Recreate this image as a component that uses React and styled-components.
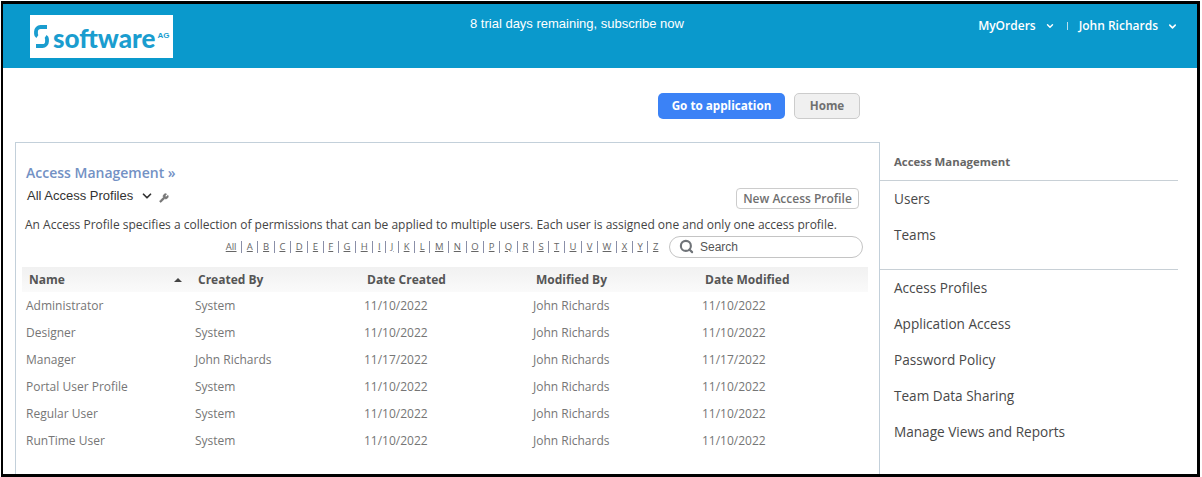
import React from "react";
import styled, { createGlobalStyle } from "styled-components";
import { Search as SearchIcon, ChevronDown, Wrench } from "lucide-react";

const Global = createGlobalStyle`
  html, body { margin: 0; padding: 0; background: #fff; height: 477px; overflow: hidden; }
  body { font-family: "Open Sans", "Liberation Sans", sans-serif; }
`;

const Frame = styled.div`
  box-sizing: border-box;
  margin: 1px 0 0 1px;
  width: 1199px;
  height: 476px;
  border: 3px solid #000;
  border-left-width: 2px;
  background: #fff;
  overflow: hidden;
`;

const Header = styled.header`
  height: 64px;
  background: #0a99cc;
  padding: 11px 0 0 27px;
  box-sizing: border-box;
  display: grid;
  grid-template-columns: 143px 1fr auto;
  align-items: start;
`;

const Logo = styled.div`
  width: 143px;
  height: 43px;
  background: #fff;
  display: flex;
  align-items: center;
  padding-left: 4px;
  box-sizing: border-box;
  color: #1a9dcf;
`;

const LogoWord = styled.span`
  font-family: "Lato", sans-serif;
  font-weight: 900;
  font-size: 26px;
  line-height: 1;
  margin-left: 4px;
  transform: translateY(1px);
`;

const LogoAg = styled.sup`
  font-family: "Liberation Sans", sans-serif;
  font-weight: 700;
  font-size: 8px;
  line-height: 1;
  margin-left: 2px;
  transform: translateY(-1px);
`;

const Trial = styled.div`
  font-family: "Liberation Sans", sans-serif;
  font-size: 13px;
  line-height: 16px;
  color: #fff;
  padding: 1px 0 0 297px;
`;

const UserArea = styled.nav`
  display: flex;
  align-items: center;
  color: #fff;
  font-size: 12px;
  font-weight: 600;
  line-height: 16px;
  padding: 3px 19px 0 0;
`;

const NavItem = styled.span`
  display: inline-flex;
  align-items: center;
  gap: ${(p) => p.$gap}px;
`;

const NavDivider = styled.span`
  width: 1px;
  height: 8px;
  background: #b9dfee;
  margin: 0 11px 0 12px;
`;

const ActionRow = styled.div`
  display: flex;
  gap: 9px;
  padding: 25px 0 0 655px;
  height: 49px;
  box-sizing: content-box;
`;

const PrimaryButton = styled.button`
  width: 127px;
  height: 26px;
  border: 0;
  border-radius: 5px;
  background: #3b82f6;
  color: #fff;
  font: 700 11.7px/24px "Open Sans", sans-serif;
  padding: 0 0 2px;
`;

const SecondaryButton = styled.button`
  width: 66px;
  height: 26px;
  border: 1px solid #ccc;
  border-radius: 5px;
  background: #f0f0f0;
  color: #707070;
  font: 700 11.7px/22px "Open Sans", sans-serif;
  padding: 0 0 2px;
`;

const Body = styled.div`
  display: flex;
  align-items: flex-start;
  padding-left: 12px;
`;

const Panel = styled.section`
  box-sizing: border-box;
  width: 865px;
  height: 340px;
  border: 1px solid #c3d0da;
  border-bottom: 0;
  padding: 20px 10px 0 6px;
`;

const Title = styled.h1`
  margin: 0 0 0 4px;
  font-size: 14px;
  line-height: 19px;
  font-weight: 600;
  color: #7391c4;
`;

const ToolRow = styled.div`
  display: flex;
  align-items: center;
  justify-content: space-between;
  height: 22px;
  margin: 3px 0 0 5px;
`;

const ViewPicker = styled.div`
  display: flex;
  align-items: center;
  font-family: "Liberation Sans", sans-serif;
  font-size: 13px;
  color: #333;
  margin-top: -1px;
`;

const WrenchMark = styled.span`
  display: inline-flex;
  color: #777;
  margin: 5px 0 0 5px;
`;

const ChevronMark = styled.span`
  display: inline-flex;
  color: #333;
  margin-left: 7px;
`;

const NewButton = styled.button`
  width: 123px;
  height: 21px;
  border: 1px solid #ccc;
  border-radius: 4px;
  background: #fff;
  color: #707070;
  font: 600 12px "Open Sans", sans-serif;
  padding: 0;
  margin: 5px 10px 0 0;
`;

const Description = styled.p`
  margin: 10px 0 0 3px;
  font-size: 12px;
  line-height: 16px;
  color: #444;
  white-space: nowrap;
`;

const FilterRow = styled.div`
  display: flex;
  align-items: center;
  justify-content: flex-end;
  height: 23px;
  margin: 2px 6px 0 0;
`;

const Alphabet = styled.div`
  display: flex;
  align-items: center;
  margin-right: 6px;
  font-size: 9.5px;
  color: #666;
`;

const Letter = styled.a`
  text-decoration: underline;
  color: #666;
  line-height: 12px;
  padding: 0 4.63px;
  border-left: ${(p) => (p.$first ? "0" : "1px solid #8a8fa8")};
`;

const SearchBox = styled.div`
  box-sizing: border-box;
  width: 194px;
  height: 22px;
  border: 1px solid #c4c4c4;
  border-radius: 11px;
  display: flex;
  align-items: center;
  padding-left: 9px;
  gap: 6px;
  color: #555;
  font: 12px "Liberation Sans", sans-serif;
`;

const SearchMark = styled.span`
  display: inline-flex;
  color: #6f7378;
`;

const Table = styled.table`
  border-collapse: collapse;
  table-layout: fixed;
  width: 846px;
  margin-top: 9px;
`;

const HeadCell = styled.th`
  box-sizing: border-box;
  height: 25px;
  padding: 0 0 0 7px;
  text-align: left;
  font-size: 12px;
  font-weight: 700;
  color: #555;
  background: linear-gradient(#f1f1f1, #fafafa);
  width: 169px;
  position: relative;
  &:last-child { width: auto; }
`;

const SortMark = styled.span`
  position: absolute;
  left: 152px;
  top: 11px;
  width: 0;
  height: 0;
  border-left: 4px solid transparent;
  border-right: 4px solid transparent;
  border-bottom: 4px solid #444;
`;

const Cell = styled.td`
  height: 27px;
  padding: 0 0 0 4px;
  font-size: 12px;
  color: #767676;
  white-space: nowrap;
`;

const Sidebar = styled.aside`
  width: 298px;
  margin-left: 0;
  color: #484848;
`;

const SideHeading = styled.div`
  height: 39px;
  box-sizing: border-box;
  padding: 12px 0 0 14px;
  font-size: 11.4px;
  line-height: 16px;
  font-weight: 700;
  color: #666;
  border-bottom: 1px solid #c8d0d6;
`;

const SideGroup = styled.div`
  margin-top: -1px;
  padding: 0 0 17px 14px;
  border-bottom: ${(p) => (p.$open ? "0" : "1px solid #c8d0d6")};
`;

const SideLink = styled.div`
  height: 36px;
  display: flex;
  align-items: center;
  font-size: 13.6px;
`;

const letters = ["All", ..."ABCDEFGHIJKLMNOPQRSTUVWXYZ"];
const rows = [
  ["Administrator", "System", "11/10/2022"],
  ["Designer", "System", "11/10/2022"],
  ["Manager", "John Richards", "11/17/2022"],
  ["Portal User Profile", "System", "11/10/2022"],
  ["Regular User", "System", "11/10/2022"],
  ["RunTime User", "System", "11/10/2022"],
];

const LogoMark = () => (
  <svg width="15" height="23" viewBox="0 0 15 23" fill="none" stroke="currentColor" strokeWidth="3.8">
    <path d="M13 2H6.5A4.5 4.5 0 0 0 2 6.5V9a3 3 0 0 0 1.4 2.5" />
    <path d="M2 21h6.500A4.500 4.500 0 0 0 13 16.500V14a3 3 0 0 0-1.400-2.500" />
  </svg>
);

export default function App() {
  return (
    <>
      <Global />
      <Frame>
        <Header>
          <Logo>
            <LogoMark />
            <LogoWord>software</LogoWord>
            <LogoAg>AG</LogoAg>
          </Logo>
          <Trial>8 trial days remaining, subscribe now</Trial>
          <UserArea>
            <NavItem $gap={9}>MyOrders <ChevronDown size={10} strokeWidth={3.4} /></NavItem>
            <NavDivider />
            <NavItem $gap={9}>John Richards <ChevronDown size={11} strokeWidth={3.4} /></NavItem>
          </UserArea>
        </Header>
        <ActionRow>
          <PrimaryButton>Go to application</PrimaryButton>
          <SecondaryButton>Home</SecondaryButton>
        </ActionRow>
        <Body>
          <Panel>
            <Title>Access Management »</Title>
            <ToolRow>
              <ViewPicker>
                All Access Profiles
                <ChevronMark><ChevronDown size={14} strokeWidth={3} /></ChevronMark>
                <WrenchMark><Wrench size={10} fill="currentColor" /></WrenchMark>
              </ViewPicker>
              <NewButton>New Access Profile</NewButton>
            </ToolRow>
            <Description>
              An Access Profile specifies a collection of permissions that can be applied to multiple users. Each user is assigned one and only one access profile.
            </Description>
            <FilterRow>
              <Alphabet>
                {letters.map((l, i) => (
                  <Letter key={l} $first={i === 0}>{l}</Letter>
                ))}
              </Alphabet>
              <SearchBox>
                <SearchMark><SearchIcon size={15} strokeWidth={3.4} /></SearchMark>
                Search
              </SearchBox>
            </FilterRow>
            <Table>
              <thead>
                <tr>
                  <HeadCell>Name<SortMark /></HeadCell>
                  <HeadCell>Created By</HeadCell>
                  <HeadCell>Date Created</HeadCell>
                  <HeadCell>Modified By</HeadCell>
                  <HeadCell>Date Modified</HeadCell>
                </tr>
              </thead>
              <tbody>
                {rows.map((r) => (
                  <tr key={r[0]}>
                    <Cell>{r[0]}</Cell>
                    <Cell>{r[1]}</Cell>
                    <Cell>{r[2]}</Cell>
                    <Cell>John Richards</Cell>
                    <Cell>{r[2]}</Cell>
                  </tr>
                ))}
              </tbody>
            </Table>
          </Panel>
          <Sidebar>
            <SideHeading>Access Management</SideHeading>
            <SideGroup>
              <SideLink>Users</SideLink>
              <SideLink>Teams</SideLink>
            </SideGroup>
            <SideGroup $open>
              <SideLink>Access Profiles</SideLink>
              <SideLink>Application Access</SideLink>
              <SideLink>Password Policy</SideLink>
              <SideLink>Team Data Sharing</SideLink>
              <SideLink>Manage Views and Reports</SideLink>
            </SideGroup>
          </Sidebar>
        </Body>
      </Frame>
    </>
  );
}
